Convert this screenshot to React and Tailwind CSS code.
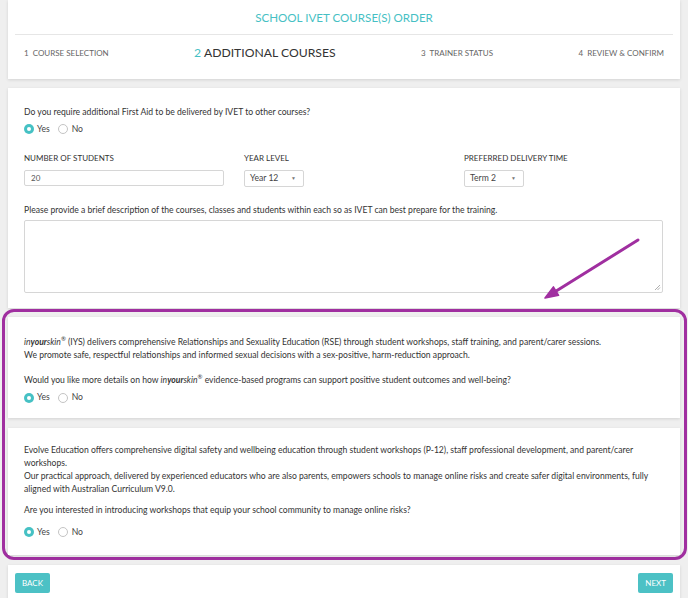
import React from "react";

const font = { fontFamily: "Lato, 'Open Sans', sans-serif" };

function Radio({ checked }) {
  return checked ? (
    <span className="shrink-0 w-[10px] h-[10px] rounded-full bg-[#46c1c4] flex items-center justify-center">
      <span className="block w-[4px] h-[4px] rounded-full bg-white" />
    </span>
  ) : (
    <span className="shrink-0 block w-[10px] h-[10px] rounded-full border border-[#c4c4c4] bg-white" />
  );
}

function YesNo({ className = "" }) {
  return (
    <div className={"flex items-center text-[8.6px] text-[#444] leading-none " + className}>
      <Radio checked />
      <span className="ml-[3px]">Yes</span>
      <span className="ml-[8px] flex"><Radio /></span>
      <span className="ml-[4px]">No</span>
    </div>
  );
}

function Select({ value }) {
  return (
    <div className="w-[60px] h-[17px] border border-[#d6d6d6] rounded-[2px] bg-white flex items-center justify-between pl-[5px] pr-[7px] text-[8.6px] text-[#444]">
      <span>{value}</span>
      <span className="text-[5px] text-[#777]">▼</span>
    </div>
  );
}

function IYS() {
  return (
    <span>
      <i>in</i>
      <b><i>your</i></b>
      <i>skin</i>
      <span className="text-[6px] align-super">®</span>
    </span>
  );
}

export default function App() {
  return (
    <div className="relative w-[688px] h-[598px] overflow-hidden bg-[#efefef] text-[#333]" style={font}>
      {/* header card */}
      <div className="mx-2 bg-white shadow-[0_1px_3px_rgba(0,0,0,0.12)] h-[79px] flex flex-col">
        <div className="h-[35px] mx-[7px] border-b border-[#e6e6e6] flex items-center justify-center text-[11.6px] text-[#46bfc4] pt-[1px]">
          SCHOOL IVET COURSE(S) ORDER
        </div>
        <div className="flex-1 flex items-center justify-between px-4 text-[8px] text-[#666] pb-[8px]">
          <span>1&nbsp; COURSE SELECTION</span>
          <span className="text-[12.2px] text-[#333]"><span className="text-[#46bfc4]">2</span> ADDITIONAL COURSES</span>
          <span>3&nbsp; TRAINER STATUS</span>
          <span>4&nbsp; REVIEW &amp; CONFIRM</span>
        </div>
      </div>

      {/* form card */}
      <div className="mx-2 mt-[9px] bg-white shadow-[0_1px_3px_rgba(0,0,0,0.12)] h-[220px] px-4 pt-[18px] text-[8.6px] text-[#333]">
        <div className="leading-[13px]">Do you require additional First Aid to be delivered by IVET to other courses?</div>
        <YesNo className="mt-[5px]" />
        <div className="grid grid-cols-3 gap-x-5 mt-[18px]">
          <div>
            <div className="leading-[12px] text-[8px]">NUMBER OF STUDENTS</div>
            <div className="mt-[6px] h-[16px] border border-[#d6d6d6] rounded-[2px] flex items-center pl-[6px] text-[8px] text-[#555]">20</div>
          </div>
          <div>
            <div className="leading-[12px] text-[8px]">YEAR LEVEL</div>
            <div className="mt-[6px]"><Select value="Year 12" /></div>
          </div>
          <div>
            <div className="leading-[12px] text-[8px]">PREFERRED DELIVERY TIME</div>
            <div className="mt-[6px]"><Select value="Term 2" /></div>
          </div>
        </div>
        <div className="mt-[17px] leading-[13px]">Please provide a brief description of the courses, classes and students within each so as IVET can best prepare for the training.</div>
        <div className="relative mt-[3px] h-[73px] w-[639px] border border-[#d6d6d6] rounded-[2px]">
          <svg className="absolute right-[1px] bottom-[1px]" width="7" height="7" viewBox="0 0 7 7">
            <path d="M6 1 L1 6 M6 3.5 L3.5 6" stroke="#999" strokeWidth="0.8" />
          </svg>
        </div>
      </div>

      {/* purple annotation wrapper */}
      <div className="ml-[2px] mr-[1px] mt-[1px] border-[3px] border-[#a02fa0] rounded-[12px] pl-[3px] pr-[4px] pt-[5px] pb-[2px]">
        <div className="bg-white shadow-[0_1px_3px_rgba(0,0,0,0.12)] h-[101px] px-4 pt-[15px] text-[8.6px] text-[#333]">
          <div className="leading-[13px]">
            <IYS /> (IYS) delivers comprehensive Relationships and Sexuality Education (RSE) through student workshops, staff training, and parent/carer sessions.
            <br />
            We promote safe, respectful relationships and informed sexual decisions with a sex-positive, harm-reduction approach.
          </div>
          <div className="leading-[13px] mt-[8px]">
            Would you like more details on how <IYS /> evidence-based programs can support positive student outcomes and well-being?
          </div>
          <YesNo className="mt-[6px]" />
        </div>
        <div className="mt-[10px] bg-white shadow-[0_1px_3px_rgba(0,0,0,0.12)] h-[127px] px-4 pt-[16px] text-[8.6px] text-[#333]">
          <div className="leading-[13px]">
            Evolve Education offers comprehensive digital safety and wellbeing education through student workshops (P-12), staff professional development, and parent/carer workshops.
            <br />
            Our practical approach, delivered by experienced educators who are also parents, empowers schools to manage online risks and create safer digital environments, fully aligned with Australian Curriculum V9.0.
          </div>
          <div className="leading-[13px] mt-[8px]">
            Are you interested in introducing workshops that equip your school community to manage online risks?
          </div>
          <YesNo className="mt-[10px]" />
        </div>
      </div>

      {/* bottom card */}
      <div className="mx-2 mt-[5px] bg-white shadow-[0_1px_3px_rgba(0,0,0,0.12)] h-[40px] px-[7px] pt-[8px] flex justify-between items-start">
        <button className="h-[20px] px-[7px] bg-[#4cc1c5] text-white text-[8px] rounded-[2px]">BACK</button>
        <button className="h-[20px] px-[7px] bg-[#4cc1c5] text-white text-[8px] rounded-[2px]">NEXT</button>
      </div>

      {/* arrow annotation */}
      <svg className="absolute left-0 top-0 pointer-events-none" width="688" height="598">
        <line x1="638" y1="240" x2="553" y2="293" stroke="#a02fa0" strokeWidth="3" strokeLinecap="round" />
        <polygon points="545,298 553.4,286.9 558.6,295.3" fill="#a02fa0" stroke="#a02fa0" strokeWidth="1.5" strokeLinejoin="round" />
      </svg>
    </div>
  );
}
